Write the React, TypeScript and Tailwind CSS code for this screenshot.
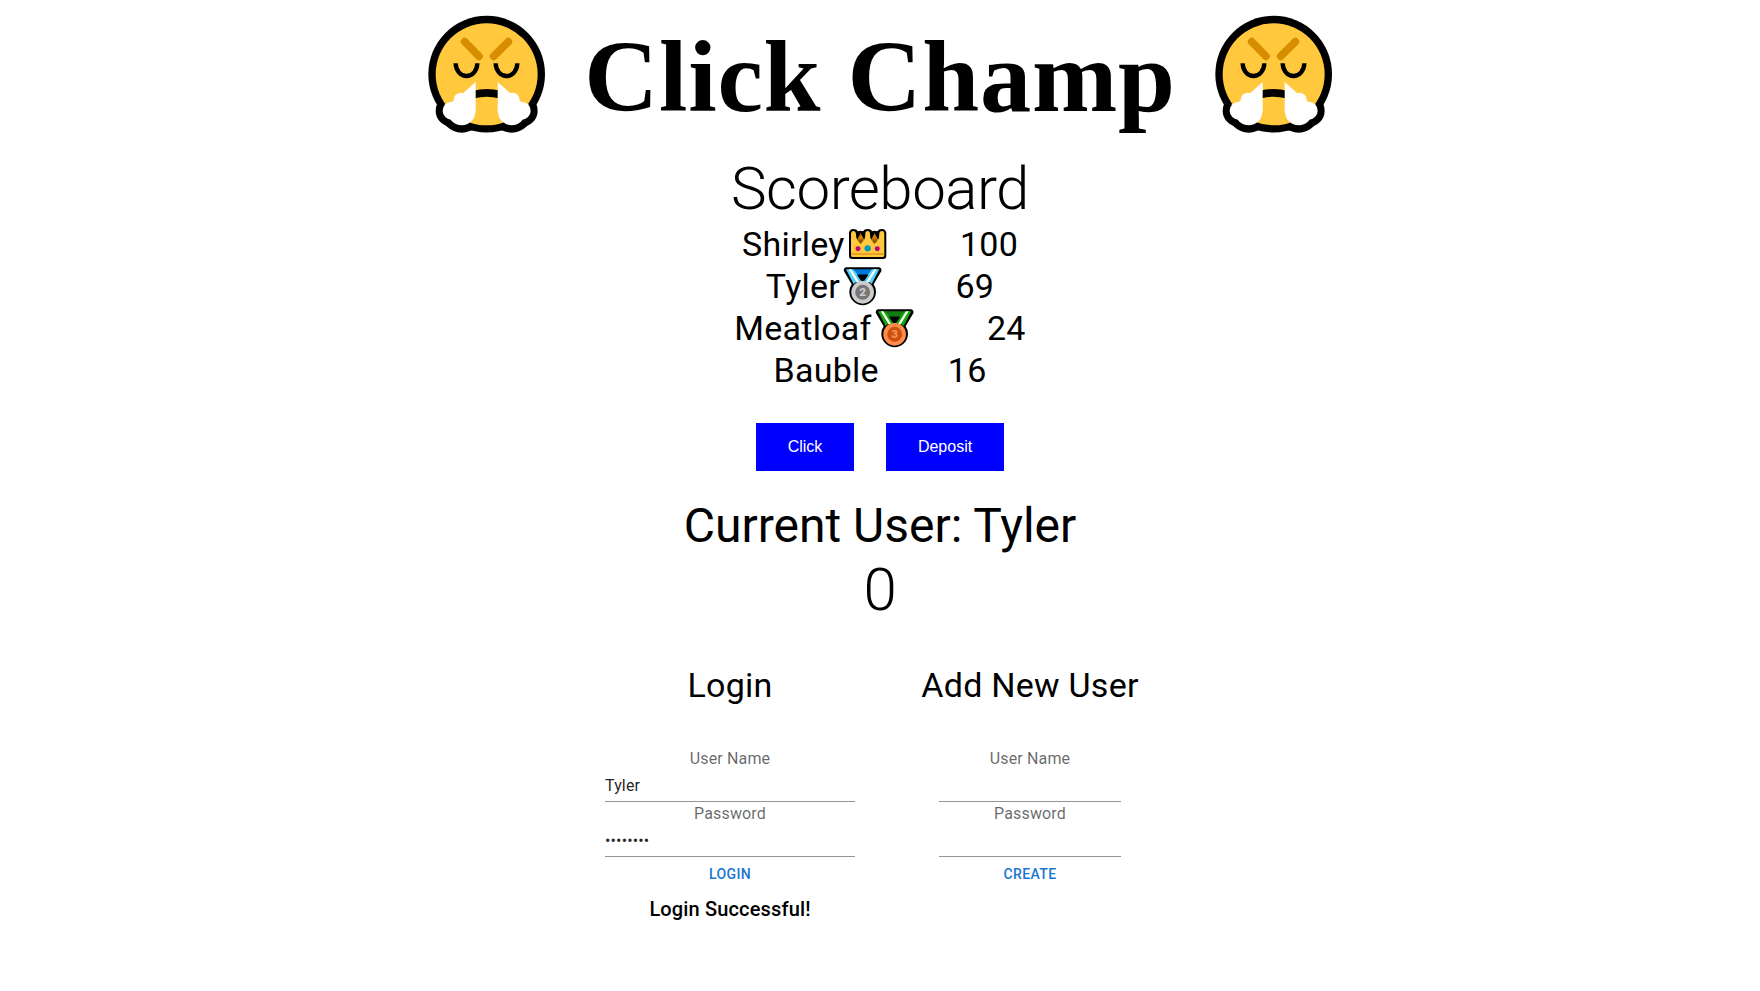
import type { ReactNode } from "react";

function Puff() {
  return (
    <>
      <circle cx="125" cy="332" r="27" />
      <circle cx="153" cy="300" r="22" />
      <circle cx="155" cy="335" r="41" />
      <path d="M197 246V336H130L160 279Z" />
    </>
  );
}

function FaceWithSteam({ className }: { className: string }) {
  return (
    <svg viewBox="51 45 357 357" className={className}>
      <g fill="#000">
        <circle cx="230" cy="222.500" r="175" />
        <circle cx="125" cy="332" r="48" />
        <circle cx="155" cy="335" r="63" />
        <circle cx="335" cy="332" r="48" />
        <circle cx="305" cy="335" r="63" />
        <path d="M155 360h150v32q-75-4-150 0z" />
      </g>
      <circle cx="230" cy="223" r="153" fill="#FFC83D" />
      <path d="M164 125L207 169M295 125L251 169" stroke="#D68D00" strokeWidth="23" strokeLinecap="round" fill="none" />
      <path d="M137 190a32.500 38 0 0 0 65 0M257 190a32.500 38 0 0 0 65 0" stroke="#000" strokeWidth="13" fill="none" />
      <path d="M190 284q40-11 80 0" stroke="#000" strokeWidth="23" fill="none" />
      <g fill="#fff">
        <Puff />
        <g transform="translate(460 0) scale(-1 1)">
          <Puff />
        </g>
      </g>
    </svg>
  );
}

function Crown() {
  return (
    <svg viewBox="384 234 118 96" className="h-8 w-[39.300px]">
      <path d="M387 318V252a13 13 0 0 1 13-15q10 0 14 7 8-4 15 0 4-7 14-7t14 7q7-4 15 0 4-7 14-7a13 13 0 0 1 13 15v66q0 9-9 9H396q-9 0-9-9z" fill="#000" />
      <path d="M422 250l13 24-13 24-13-24zM464 250l13 24-13 24-13-24z" fill="#D67D00" />
      <path d="M416 264l6 6 6-6v18h-12zM458 264l6 6 6-6v18h-12z" fill="#8A5A00" />
      <path d="M393 316V252q0-9 7-9t8 9q0 16 9 25l5 5 5-5q9-9 9-25 0-9 7-9t7 9q0 16 9 25l5 5 5-5q9-9 9-25 0-9 8-9t7 9v64q0 5-5 5H398q-5 0-5-5z" fill="#FFC83D" />
      <path d="M393 312h101" stroke="#D67D00" strokeWidth="3" />
      <circle cx="414" cy="296" r="7.500" fill="#BF0077" />
      <circle cx="443" cy="295" r="9.500" fill="#0099BC" />
      <circle cx="472" cy="296" r="7.500" fill="#BF0077" />
    </svg>
  );
}

type MedalProps = { place: string; ribbon: string; back: string; disc: string; inner: string; digit: string };

function Medal({ place, ribbon, back, disc, inner, digit }: MedalProps) {
  return (
    <svg viewBox="0 0 118 118" className="mt-px size-[39.300px]">
      <path d="M9 1h100q9 3 6 12L92 52a40 40 0 1 1-66 0L3 13Q0 4 9 1z" fill="#000" />
      <path d="M32 7h54L76 23H42z" fill={back} />
      <path d="M9 7h23l27 37-20 2q-4 2-7 5zM109 7H86L59 44l20 2q4 2 7 5z" fill={ribbon} />
      <path d="M17 7h8l23 37-7 2zM101 7h-8L70 44l7 2z" fill="#fff" />
      <path d="M42 23h34L64 41H54z" fill="#000" />
      <circle cx="59" cy="76" r="34" fill={disc} />
      <circle cx="59" cy="76" r="22.500" fill={inner} />
      <text x="59" y="88.500" textAnchor="middle" fontSize="35" fontWeight="900" fill={digit} className="font-['Roboto',sans-serif]">{place}</text>
    </svg>
  );
}

function ScoreRow({ name, score, icon, gap }: { name: string; score: number; icon?: ReactNode; gap: string }) {
  return (
    <div className="flex h-[42px] items-center justify-center text-[34px] leading-[42px] tracking-[0.00735em]">
      <span>{name}</span>
      {icon && <span className="ml-[3px]">{icon}</span>}
      <span className={gap}>{score}</span>
    </div>
  );
}

function Field({ label, value, type = "text" }: { label: string; value?: string; type?: string }) {
  return (
    <label className="block w-full text-base leading-[23px] tracking-[0.00938em] text-black/60">
      <span className="block text-center">{label}</span>
      <input
        type={type}
        defaultValue={value}
        className="block h-8 w-full border-b border-[#949494] pt-1 pb-1 text-black/87 outline-none"
      />
    </label>
  );
}

function FormColumn({ title, action, width, className, children }: { title: string; action: string; width: string; className: string; children: ReactNode }) {
  return (
    <div className={className}>
      <h4 className="text-[34px] leading-[42px] tracking-[0.00735em] whitespace-nowrap">{title}</h4>
      <div className={width}>{children}</div>
      <button className="px-2 pt-[5px] pb-1.5 text-sm leading-[24.500px] font-medium tracking-[0.02857em] text-[#1976d2]">{action}</button>
    </div>
  );
}

export default function App() {
  return (
    <main className="flex h-[991px] flex-col items-center overflow-hidden bg-white font-['Roboto',sans-serif] text-black">
      <header className="flex h-[153px] items-start justify-center">
        <FaceWithSteam className="mt-[15px] size-[119px]" />
        <h1 className="mt-[18px] mr-[38px] ml-[38px] font-['Liberation_Serif',serif] text-[102.400px] leading-[118px] font-bold tracking-[0.00735em] whitespace-nowrap">Click Champ</h1>
        <FaceWithSteam className="mt-[15px] size-[119px]" />
      </header>

      <h2 className="h-[70px] text-[60px] leading-[72px] font-light tracking-[-0.00833em]">Scoreboard</h2>
      <ScoreRow name="Shirley" score={100} icon={<Crown />} gap="ml-[73px]" />
      <ScoreRow name="Tyler" score={69} icon={<Medal place="2" ribbon="#50D0FF" back="#0078D7" disc="#CCCCCC" inner="#767676" digit="#CCCCCC" />} gap="ml-[73px]" />
      <ScoreRow name="Meatloaf" score={24} icon={<Medal place="3" ribbon="#16A60C" back="#107C10" disc="#FF8C4B" inner="#CA5010" digit="#FF8C4B" />} gap="ml-[73px]" />
      <ScoreRow name="Bauble" score={16} gap="ml-[69px]" />

      <div className="mt-8 flex gap-8 font-['Liberation_Sans',sans-serif] text-base leading-[18px] text-white">
        <button className="h-12 w-[98px] bg-[#0000ff]">Click</button>
        <button className="h-12 w-[118px] bg-[#0000ff]">Deposit</button>
      </div>

      <h3 className="mt-[27px] text-[48px] leading-[56px]">Current User: Tyler</h3>
      <h2 className="text-[60px] leading-[72px] font-light tracking-[-0.00833em]">0</h2>

      <div className="mt-[38px] mr-[17px] flex items-start gap-[67px]">
        <FormColumn title="Login" action="LOGIN" width="mt-[41px] w-[250px]" className="flex w-[250px] flex-col items-center">
          <Field label="User Name" value="Tyler" />
          <Field label="Password" type="password" value="password" />
        </FormColumn>
        <FormColumn title="Add New User" action="CREATE" width="mt-[41px] w-[182px]" className="flex w-[216px] flex-col items-center">
          <Field label="User Name" />
          <Field label="Password" type="password" />
        </FormColumn>
      </div>
      <div className="mr-[17px] flex w-[533px]">
        <h6 className="w-[250px] text-center text-xl leading-8 font-medium tracking-[0.0075em]">Login Successful!</h6>
      </div>
    </main>
  );
}
